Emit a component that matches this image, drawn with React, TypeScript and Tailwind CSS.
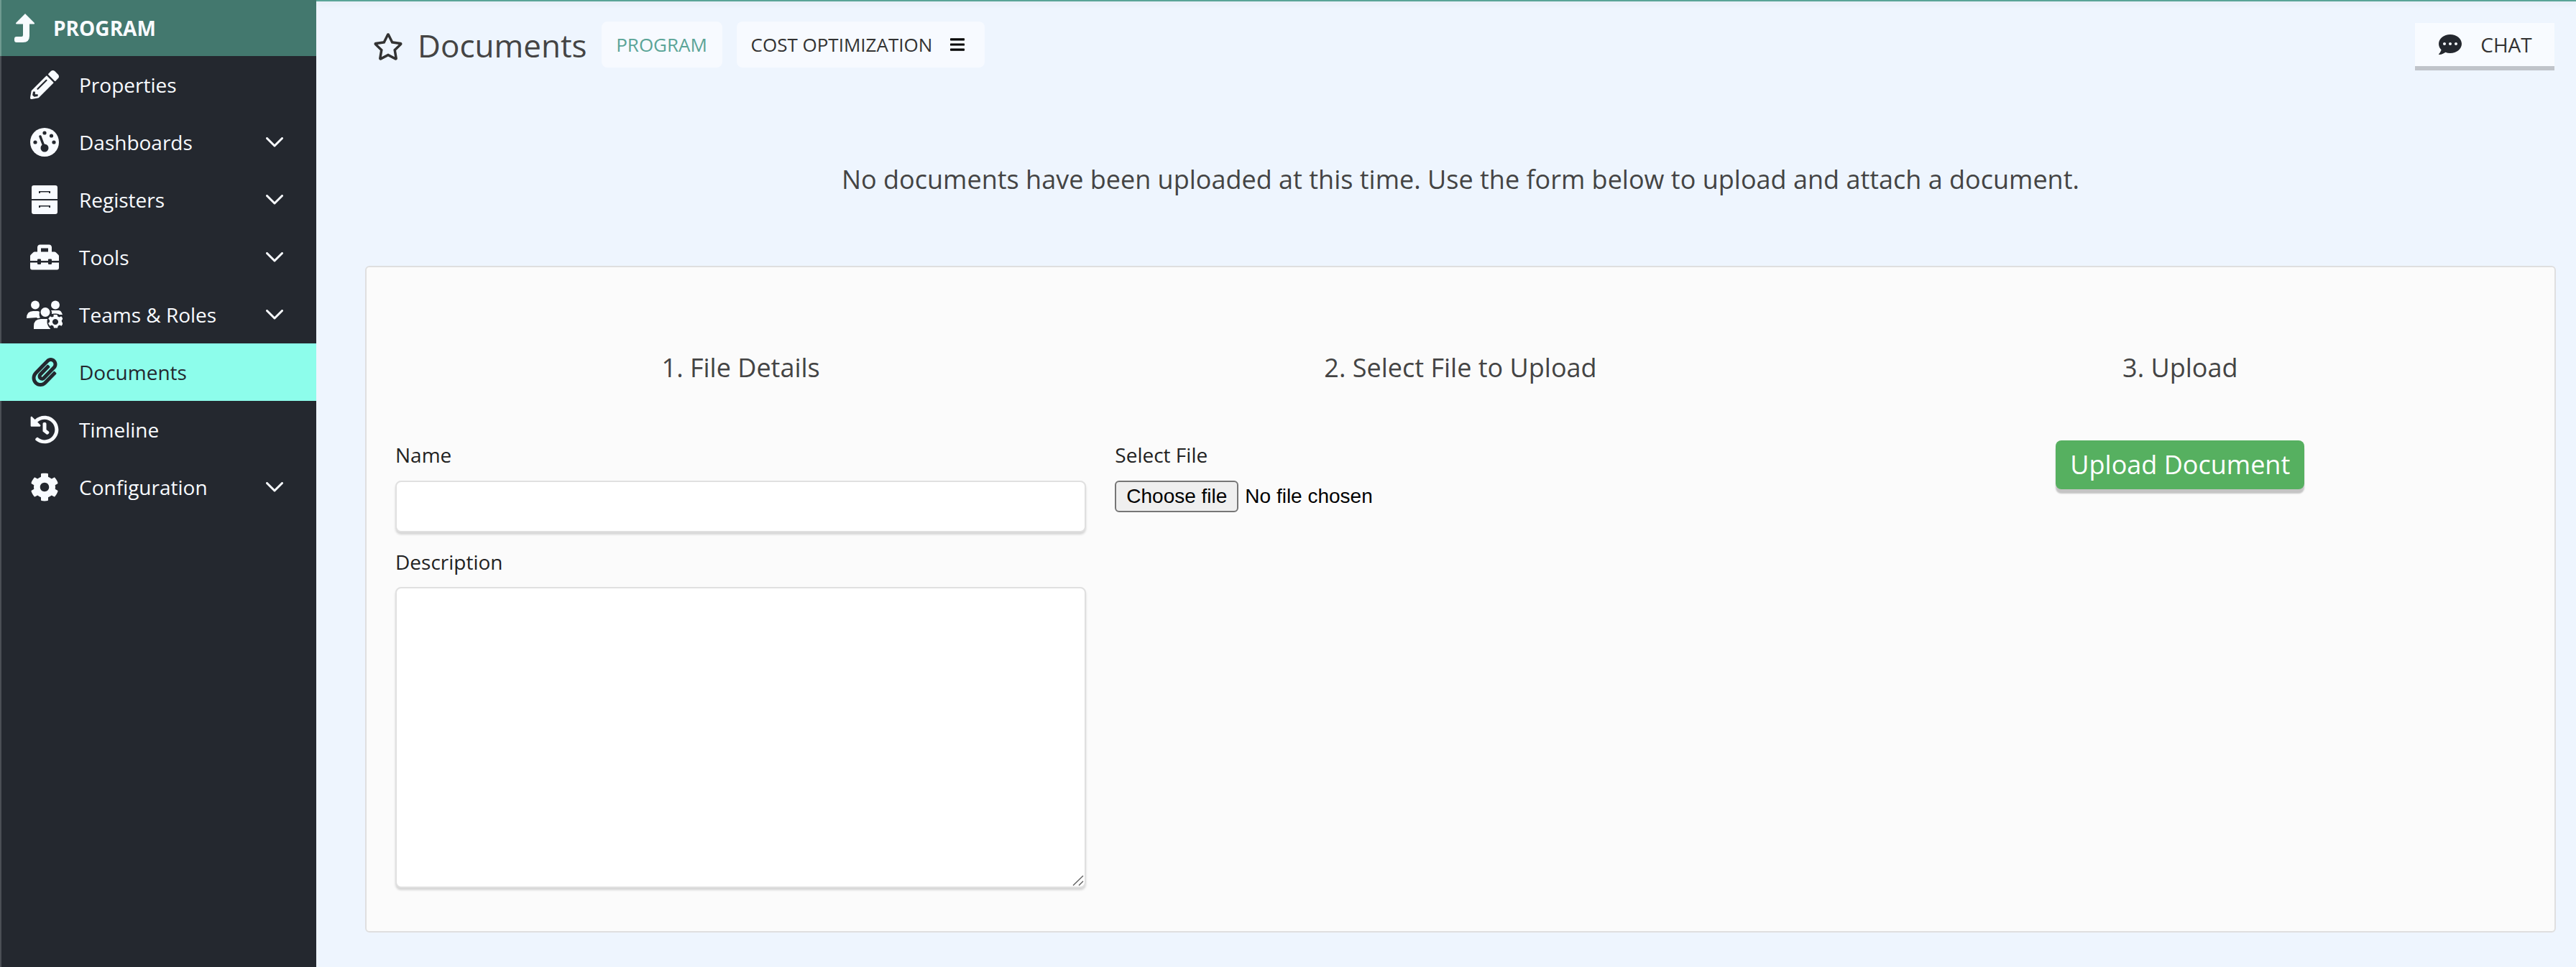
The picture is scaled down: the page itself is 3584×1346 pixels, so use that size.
import React from "react";
import {
  FaPencilAlt,
  FaToolbox,
  FaPaperclip,
  FaHistory,
  FaCog,
  FaRegStar,
  FaBars,
  FaCommentDots,
} from "react-icons/fa";

type IconProps = { className?: string };

const ProgramIcon = ({ className }: IconProps) => (
  <svg viewBox="0 0 28 40" className={className} fill="currentColor">
    <path d="M15 0l12.500 12.500q1.500 2-1 2H21V31q0 9-9 9H3q-3 0-3-3v-2q0-3 3-3h7q2 0 2-2V14.500H3.500q-2.500 0-1-2z" />
  </svg>
);

const DashIcon = ({ className }: IconProps) => (
  <svg viewBox="0 0 40 40" className={className}>
    <circle cx="20" cy="20" r="20" fill="currentColor" />
    <g fill="#24282f">
      <circle cx="20" cy="7" r="2.600" />
      <circle cx="29.500" cy="11" r="2.600" />
      <circle cx="33" cy="20" r="2.600" />
      <circle cx="7" cy="20" r="2.600" />
      <circle cx="20" cy="28" r="5.500" />
    </g>
    <path d="M20 28L14 12" stroke="#24282f" strokeWidth="3.500" strokeLinecap="round" />
  </svg>
);

const RegisterIcon = ({ className }: IconProps) => (
  <svg viewBox="0 0 36 40" className={className} fill="currentColor">
    <path
      fillRule="evenodd"
      d="M3 0h30a3 3 0 0 1 3 3v16H0V3a3 3 0 0 1 3-3zM10 8v3h2V9.500h12V11h2V8zM0 21h36v16a3 3 0 0 1-3 3H3a3 3 0 0 1-3-3zM10 28v3h2v-1.500h12V31h2v-3z"
    />
  </svg>
);

const TeamsIcon = ({ className }: IconProps) => (
  <svg viewBox="0 0 50 40" className={className} fill="currentColor">
    <circle cx="12" cy="6.500" r="6" />
    <circle cx="40" cy="6.500" r="6" />
    <circle cx="26" cy="16.500" r="6.500" />
    <path d="M0 25q0-10 9-10h6q2 0 3 1-1 6 1 8-4 2-5 0z" />
    <path d="M34 14h11q3 0 5 6h-9q-3-2-6-1 1-3-1-5z" />
    <path d="M10 40v-4q0-10 10-10h13v14z" />
    <circle cx="40" cy="30" r="11.500" fill="#24282f" />
    <path
      fillRule="evenodd"
      d="M37.500 20h5l.8 2.600 2.400 1 2.500-1.300 2.500 3.400-1.900 2 .2 2.600 2 1.800-2.500 3.600-2.500-1.200-2.300 1.200-.7 2.800h-5l-.7-2.800-2.400-1.200-2.500 1.200-2.400-3.600 2-1.800.2-2.600-2-2 2.600-3.400 2.400 1.300 2.500-1zM40 26a4 4 0 1 0 .01 0z"
    />
  </svg>
);

const Chevron = () => (
  <svg viewBox="0 0 24 14" className="h-[14px] w-[24px]" fill="none" stroke="currentColor" strokeWidth="3" strokeLinecap="round" strokeLinejoin="round">
    <path d="M1.500 1.500L12 12L22.500 1.500" />
  </svg>
);

const items = [
  { label: "Properties", icon: <FaPencilAlt className="h-[40px] w-[40px]" /> },
  { label: "Dashboards", icon: <DashIcon className="h-[40px] w-[40px]" />, more: true },
  { label: "Registers", icon: <RegisterIcon className="h-[40px] w-[36px]" />, more: true },
  { label: "Tools", icon: <FaToolbox className="h-[40px] w-[40px]" />, more: true },
  { label: "Teams & Roles", icon: <TeamsIcon className="h-[40px] w-[50px] max-w-none shrink-0" />, more: true },
  { label: "Documents", icon: <FaPaperclip className="h-[40px] w-[36px]" />, active: true },
  { label: "Timeline", icon: <FaHistory className="h-[40px] w-[40px]" /> },
  { label: "Configuration", icon: <FaCog className="h-[40px] w-[40px]" />, more: true },
];

export default function App() {
  return (
    <div className="flex h-[1346px] w-[3584px] overflow-hidden bg-[#eef5fe] font-['Open_Sans',sans-serif] text-[#333]">
      <aside className="h-full w-[440px] shrink-0 border-l-2 border-l-[#4b4f55] bg-[#24282f] text-[#f8fbff]">
        <div className="-ml-[2px] flex h-[78px] items-center border-l-2 border-l-[#6f9a90] bg-[#43786e] pl-[18px]">
          <ProgramIcon className="h-[40px] w-[28px]" />
          <span className="ml-[26px] text-[28px] font-bold leading-none">PROGRAM</span>
        </div>
        {items.map((it) => (
          <div
            key={it.label}
            className={
              it.active
                ? "-ml-[2px] flex h-[80px] items-center bg-[#8dfdeb] pl-[42px] pr-[46px] text-[#24282f]"
                : "flex h-[80px] items-center pl-[40px] pr-[46px]"
            }
          >
            <span className="flex w-[40px] justify-center">{it.icon}</span>
            <span className="ml-[28px] flex-1 text-[28px] leading-none">{it.label}</span>
            {it.more && <Chevron />}
          </div>
        ))}
      </aside>

      <main className="min-w-0 flex-1">
        <div className="h-[2px] bg-[#5aa497] shadow-[0_2px_8px_rgba(0,0,0,0.12)]" />
        <div className="flex h-[96px] items-start justify-between pl-[79px] pr-[30px]">
          <div className="mt-[28px] flex items-start">
            <FaRegStar className="mt-[16px] h-[38px] w-[42px] text-[#333]" />
            <h1 className="ml-[20px] mt-[5px] text-[44px] font-normal leading-[56px] text-[#444]">Documents</h1>
            <div className="ml-[20px] flex h-[64px] w-[168px] items-center justify-center rounded-[8px] bg-[#f7faff] text-[26px] text-[#5aa497]">
              PROGRAM
            </div>
            <div className="ml-[20px] flex h-[64px] w-[345px] items-center rounded-[8px] bg-[#f7faff] pl-[20px] text-[26px] text-[#333]">
              COST OPTIMIZATION
              <FaBars className="ml-[25px] h-[24px] w-[20px] text-black" />
            </div>
          </div>
          <div className="mt-[30px] flex h-[60px] w-[194px] items-center justify-center bg-[#f8fbff] pl-[2px] text-[#333] shadow-[0_6px_0_#c0c4ca]">
            <FaCommentDots className="h-[32px] w-[32px] text-[#24282f]" />
            <span className="ml-[26px] text-[28px] leading-none">CHAT</span>
          </div>
        </div>

        <p className="mt-[127px] pl-[40px] text-center text-[36px] leading-[50px] text-[#444]">
          No documents have been uploaded at this time. Use the form below to upload and attach a document.
        </p>

        <section className="ml-[68px] mr-[28px] mt-[95px] grid h-[928px] grid-cols-3 rounded-[6px] border-2 border-[#dfdfdf] bg-[#fbfbfb] px-[20px] pt-[115px]">
          <div className="px-[20px]">
            <h2 className="text-center text-[36px] font-normal leading-[50px] text-[#444]">1. File Details</h2>
            <label className="mt-[76px] block text-[28px] leading-[40px] text-[#222]">Name</label>
            <input className="mt-[16px] block h-[72px] w-full rounded-[8px] border-2 border-[#e0e0e0] bg-white shadow-[0_3px_3px_rgba(0,0,0,0.15)]" />
            <label className="mt-[21px] block text-[28px] leading-[40px] text-[#222]">Description</label>
            <div className="relative mt-[15px]">
              <textarea className="block h-[419px] w-full resize-none rounded-[8px] border-2 border-[#e0e0e0] bg-white shadow-[0_3px_3px_rgba(0,0,0,0.15)]" />
              <svg viewBox="0 0 16 15" className="absolute bottom-[3px] right-[3px] h-[15px] w-[16px]" fill="none" stroke="#666" strokeWidth="1.500">
                <path d="M1 14.500L15 1M9 14.500L15 8.500" />
              </svg>
            </div>
          </div>
          <div className="px-[20px]">
            <h2 className="text-center text-[36px] font-normal leading-[50px] text-[#444]">2. Select File to Upload</h2>
            <label className="mt-[76px] block text-[28px] leading-[40px] text-[#222]">Select File</label>
            <div className="mt-[16px] flex h-[44px] items-center font-['Liberation_Sans',sans-serif] text-[28px] text-black">
              <button className="h-[44px] w-[172px] rounded-[6px] border-2 border-[#767676] bg-[#efefef] leading-none">
                Choose file
              </button>
              <span className="ml-[9px]">No file chosen</span>
            </div>
          </div>
          <div className="flex flex-col items-center px-[20px]">
            <h2 className="text-center text-[36px] font-normal leading-[50px] text-[#444]">3. Upload</h2>
            <button className="mt-[76px] h-[68px] w-[346px] rounded-[8px] bg-[#56b060] text-[36px] leading-none text-white shadow-[0_6px_2px_rgba(0,0,0,0.22)]">
              Upload Document
            </button>
          </div>
        </section>
      </main>
    </div>
  );
}
